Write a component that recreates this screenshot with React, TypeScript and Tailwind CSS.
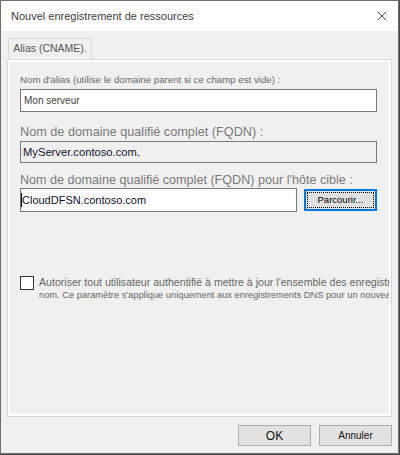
import { X } from "lucide-react";

const ui = "font-['Liberation_Sans',Arial,sans-serif]";

export default function App() {
  return (
    <div className={`h-[455px] w-[400px] bg-[#4a4a4a] ${ui}`}>
      <div className="flex h-[454px] w-[399px] flex-col border border-[#6e6e6e] bg-[#f0f0f0]">
        {/* title bar */}
        <div className="flex h-[30px] shrink-0 items-center justify-between bg-white pl-[10px] pr-[8px]">
          <span className="text-[11px] text-[#3f3a44]">Nouvel enregistrement de ressources</span>
          <X size={16} strokeWidth={1.2} className="text-[#222]" />
        </div>

        {/* tab */}
        <div className="ml-[7px] mt-[7px] flex">
          <div className="flex h-[21px] w-[84px] items-center justify-center border border-b-0 border-[#d9d9d9] bg-[#f0f0f0] text-[10.5px] text-[#555]">
            Alias (CNAME).
          </div>
        </div>

        {/* panel */}
        <div className="mx-[6px] h-[358px] border border-[#d9d9d9] bg-white p-[2px]">
          <div className="flex h-full flex-col overflow-hidden bg-[#f0f0f0] pl-[10px] pr-[9px]">
            <p className="mt-[11px] text-[9.7px] leading-[14px] text-[#6a6a6a]">
              Nom d'alias (utilise le domaine parent si ce champ est vide) :
            </p>
            <div className="mt-[2px] flex h-[23px] w-[357px] items-center border border-[#7a7a7a] bg-white pl-[3px] text-[10px] text-[#444]">
              Mon serveur
            </div>

            <p className="mt-[13px] text-[12.7px] leading-[15px] text-[#7a7a7a]">
              Nom de domaine qualifié complet (FQDN) :
            </p>
            <div className="mt-[1px] flex h-[22px] w-[357px] items-center border border-[#7a7a7a] bg-[#f0f0f0] pl-[2px] text-[11.2px] text-[#101030]">
              MyServer.contoso.com.
            </div>

            <p className="mt-[10px] text-[12.6px] leading-[15px] text-[#7a7a7a]">
              Nom de domaine qualifié complet (FQDN) pour l'hôte cible :
            </p>
            <div className="flex items-center gap-[7px]">
              <div className="flex h-[24px] w-[277px] items-center border border-[#7a7a7a] bg-white text-[11px] text-[#101030]">
                <span className="h-[14px] w-px bg-black" />
                CloudDFSN.contoso.com
              </div>
              <button className="flex h-[22px] w-[73px] items-center justify-center border-2 border-[#0078d7] bg-[#e1e1e1] p-px">
                <span className="flex h-full w-full items-center justify-center border border-dotted border-black text-[9.5px] text-black">
                  Parcourir...
                </span>
              </button>
            </div>

            <div className="-mr-[9px] mt-[63px] flex items-start gap-[5px] overflow-hidden">
              <span className="mt-[1px] h-[14px] w-[14px] shrink-0 border border-[#333] bg-white" />
              <div className="min-w-0 whitespace-nowrap text-[#666]">
                <p className="text-[10.6px] leading-[15px]">
                  Autoriser tout utilisateur authentifié à mettre à jour l'ensemble des enregistr
                </p>
                <p className="text-[9.3px] leading-[11px]">
                  nom. Ce paramètre s'applique uniquement aux enregistrements DNS pour un nouveau
                </p>
              </div>
            </div>
          </div>
        </div>

        {/* footer buttons */}
        <div className="mr-[6px] mt-[8px] flex justify-end gap-[8px]">
          <button className="flex h-[21px] w-[73px] items-center justify-center border border-[#adadad] bg-[#e1e1e1] text-[12px] text-[#111]">
            OK
          </button>
          <button className="flex h-[21px] w-[73px] items-center justify-center border border-[#adadad] bg-[#e1e1e1] text-[10px] text-[#111]">
            Annuler
          </button>
        </div>
      </div>
    </div>
  );
}
